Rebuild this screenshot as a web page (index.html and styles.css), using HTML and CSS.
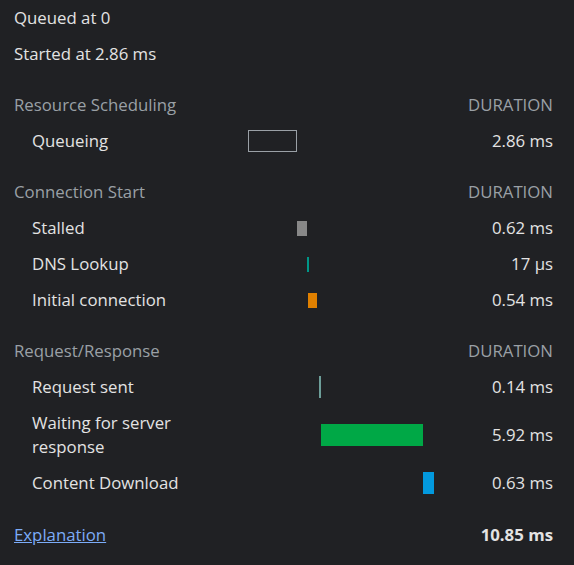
FILE: index.html
```html
<!DOCTYPE html>
<html>
<head>
<meta charset="utf-8">
<link rel="stylesheet" href="styles.css">
</head>
<body>
<div class="timing">
  <div class="meta">Queued at 0</div>
  <div class="meta">Started at 2.86 ms</div>

  <div class="section">
    <div class="row header"><span class="name">Resource Scheduling</span><span class="dur">DURATION</span></div>
    <div class="row"><span class="label">Queueing</span><div class="track"><div class="bar queueing" style="margin-left:0;width:49px"></div></div><span class="dur">2.86 ms</span></div>
  </div>

  <div class="section">
    <div class="row header"><span class="name">Connection Start</span><span class="dur">DURATION</span></div>
    <div class="row"><span class="label">Stalled</span><div class="track"><div class="bar short stalled" style="margin-left:49px;width:10px"></div></div><span class="dur">0.62 ms</span></div>
    <div class="row"><span class="label">DNS Lookup</span><div class="track"><div class="bar short dns" style="margin-left:59px;width:2px"></div></div><span class="dur">17 µs</span></div>
    <div class="row"><span class="label">Initial connection</span><div class="track"><div class="bar short connecting" style="margin-left:60px;width:9px"></div></div><span class="dur">0.54 ms</span></div>
  </div>

  <div class="section">
    <div class="row header"><span class="name">Request/Response</span><span class="dur">DURATION</span></div>
    <div class="row"><span class="label">Request sent</span><div class="track"><div class="bar sending" style="margin-left:71px;width:2px"></div></div><span class="dur">0.14 ms</span></div>
    <div class="row"><span class="label">Waiting for server response</span><div class="track"><div class="bar waiting" style="margin-left:73px;width:102px"></div></div><span class="dur">5.92 ms</span></div>
    <div class="row"><span class="label">Content Download</span><div class="track"><div class="bar receiving" style="margin-left:175px;width:11px"></div></div><span class="dur">0.63 ms</span></div>
  </div>

  <div class="row total"><a class="link" href="#">Explanation</a><span class="dur strong">10.85 ms</span></div>
</div>
</body>
</html>
```

FILE: styles.css
```css
html, body {
  margin: 0;
  padding: 0;
  background: #202124;
}
body {
  font-family: "Open Sans", "Noto Sans", sans-serif;
  font-size: 16.8px;
  color: #e3e3e3;
}
.timing {
  padding: 0 21px 0 14px;
}
.meta {
  line-height: 24px;
  padding: 6px 0;
}
.section {
  margin-top: 15px;
}
.row {
  display: grid;
  grid-template-columns: 234px 186px 1fr;
  align-items: center;
  line-height: 24px;
  padding: 6px 0;
}
.header {
  color: #9aa0a6;
  grid-template-columns: 1fr auto;
}
.label {
  padding-left: 18px;
  padding-right: 16px;
}
.track {
  display: flex;
  align-items: center;
}
.bar {
  height: 22px;
  box-sizing: border-box;
}
.bar.short {
  height: 15px;
}
.queueing {
  border: 1px solid #9aa0a6;
}
.stalled { background: #888888; }
.dns { background: #009688; }
.connecting { background: #e08000; }
.sending { background: #6d9e99; }
.waiting { background: #00a846; }
.receiving { background: #0299de; }
.dur {
  text-align: right;
}
.header .dur {
  text-transform: uppercase;
}
.total {
  margin-top: 16px;
  grid-template-columns: 1fr auto;
}
.link {
  color: #7cacf8;
  text-decoration: underline;
}
.strong {
  font-weight: 700;
}
```
